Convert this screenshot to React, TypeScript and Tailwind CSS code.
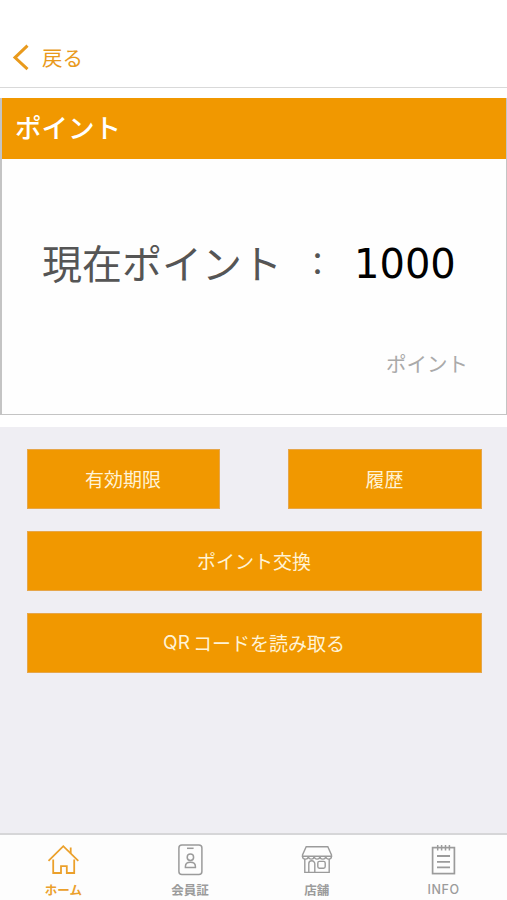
import type { ReactNode } from 'react'

const jp = "font-['Noto_Sans_CJK_JP',sans-serif]"

const iconProps = {
  width: 36,
  height: 36,
  viewBox: '0 0 36 36',
  fill: 'none',
  stroke: 'currentColor',
  strokeWidth: 1.5,
}

function HomeIcon() {
  return (
    <svg {...iconProps} strokeWidth={1.8}>
      <path d="M3.5 18.8 18.3 4.2l15 14.6" />
      <path d="M25.7 5.6v5.6M8.2 17.5V31h7.8v-6.8h5.8V31h7.4V17.5" />
    </svg>
  )
}

function CardIcon() {
  return (
    <svg {...iconProps}>
      <rect x="6.9" y="3" width="23" height="29.5" rx="3" />
      <path d="M15 6.3h6.6" />
      <circle cx="18.4" cy="15.2" r="3.2" />
      <path d="M13.4 25.6v-1.2c0-2.6 2.2-4.2 5-4.2s5 1.6 5 4.2v1.2z" />
    </svg>
  )
}

function ShopIcon() {
  return (
    <svg {...iconProps} strokeWidth={1.4}>
      <path d="M7.2 4.7h21.6l3.7 8.3v1.2H3.5V13z" />
      <path d="M3.5 14.2a2.9 2.9 0 0 0 5.8 0 2.9 2.9 0 0 0 5.8 0 2.9 2.9 0 0 0 5.8 0 2.9 2.9 0 0 0 5.8 0 2.9 2.9 0 0 0 5.8 0" />
      <path d="M5.8 17v13.4h24.4V17" />
      <path d="M9.8 30.2v-8.4a3 3 0 0 1 6 0v8.4" />
      <rect x="18.8" y="19.4" width="7.4" height="6.8" rx="1.6" />
    </svg>
  )
}

function NoteIcon() {
  return (
    <svg {...iconProps}>
      <rect x="6.6" y="5.6" width="21.8" height="26" strokeWidth="1.7" />
      <path d="M11.7 3v5.5M15.6 3v5.5M19.5 3v5.5M23.4 3v5.5" strokeWidth="1.5" />
      <path d="M11 14h13M11 19.8h13M11 25.4h13" strokeWidth="1.8" />
    </svg>
  )
}

const tabs = [
  { label: 'ホーム', icon: <HomeIcon />, active: true },
  { label: '会員証', icon: <CardIcon />, active: false },
  { label: '店舗',   icon: <ShopIcon />, active: false },
  { label: 'INFO',   icon: <NoteIcon />, active: false },
]

function ActionButton({ children }: { children: ReactNode }) {
  return (
    <button className="flex h-[60px] w-full items-center justify-center border border-[#e6a64a] bg-[#f19800] pb-0.5 pr-px text-[19px] leading-none text-[#fff3d6]">
      {children}
    </button>
  )
}

export default function App() {
  return (
    <div className={`flex h-[900px] w-[507px] flex-col overflow-hidden bg-[#efeef3] ${jp}`}>
      {/* Header */}
      <header className="flex h-[88px] shrink-0 items-end border-b border-[#d9d9d9] bg-white pb-[15px] pl-3 text-[#e99a1c]">
        <button className="flex items-center gap-[13px]">
          <svg width="17" height="30" viewBox="0 0 17 30" fill="none" stroke="currentColor" strokeWidth="3">
            <path d="M15.5 3.7 3 15.6l12.5 11.6" />
          </svg>
          <span className="text-[20.5px] leading-[28px]">戻る</span>
        </button>
      </header>

      {/* Point card */}
      <section className="shrink-0 bg-white pb-3 pt-[10px]">
        <div className="flex h-[317px] flex-col border-b border-l-2 border-r border-[#c4c4c4]">
          <h1 className="flex h-[61px] shrink-0 items-center bg-[#f19800] pb-[2px] pl-[13px] text-[26.5px] font-medium leading-none text-white">
            ポイント
          </h1>
          <div className="flex flex-1 flex-col bg-[#fefefe] pt-[78px]">
            <div className="flex h-[52px] items-center pl-[40px] text-[40px] leading-none">
              <span className="pb-[3px] text-[#555]">現在ポイント</span>
              <span className="ml-[20px] pb-[3px] text-[31px] text-[#555]">：</span>
              <span className="ml-[21px] pt-px font-['DejaVu_Sans',sans-serif] text-black">1000</span>
            </div>
            <p className="mt-[62px] pr-[38px] text-right text-[20.5px] leading-[24px] text-[#aaa]">ポイント</p>
          </div>
        </div>
      </section>

      {/* Actions */}
      <main className="flex flex-1 flex-col gap-[22px] pl-[27px] pr-[25px] pt-[22px]">
        <div className="flex justify-between">
          <div className="w-[193px]">
            <ActionButton>有効期限</ActionButton>
          </div>
          <div className="w-[194px]">
            <ActionButton>履歴</ActionButton>
          </div>
        </div>
        <ActionButton>ポイント交換</ActionButton>
        <ActionButton>
          <span className="mr-[3px] font-['Inter',sans-serif] text-[19px]">QR</span>コードを読み取る
        </ActionButton>
      </main>

      {/* Tab bar */}
      <nav className="grid h-[67px] shrink-0 grid-cols-4 border-t-2 border-[#d6d6d8] bg-[#fdfdfd]">
        {tabs.map(tab => (
          <a
            key={tab.label}
            className={`flex flex-col items-center pt-[7px] ${tab.active ? 'text-[#eba02b]' : 'text-[#9b9b9b]'}`}
          >
            {tab.icon}
            <span
              className={
                tab.label === 'INFO'
                  ? "mt-[3px] font-['Inter',sans-serif] text-[12.5px] font-medium leading-[18px] tracking-[0.6px]"
                  : 'mt-[3px] text-[12.5px] font-bold leading-[18px]'
              }
            >
              {tab.label}
            </span>
          </a>
        ))}
      </nav>
    </div>
  )
}
